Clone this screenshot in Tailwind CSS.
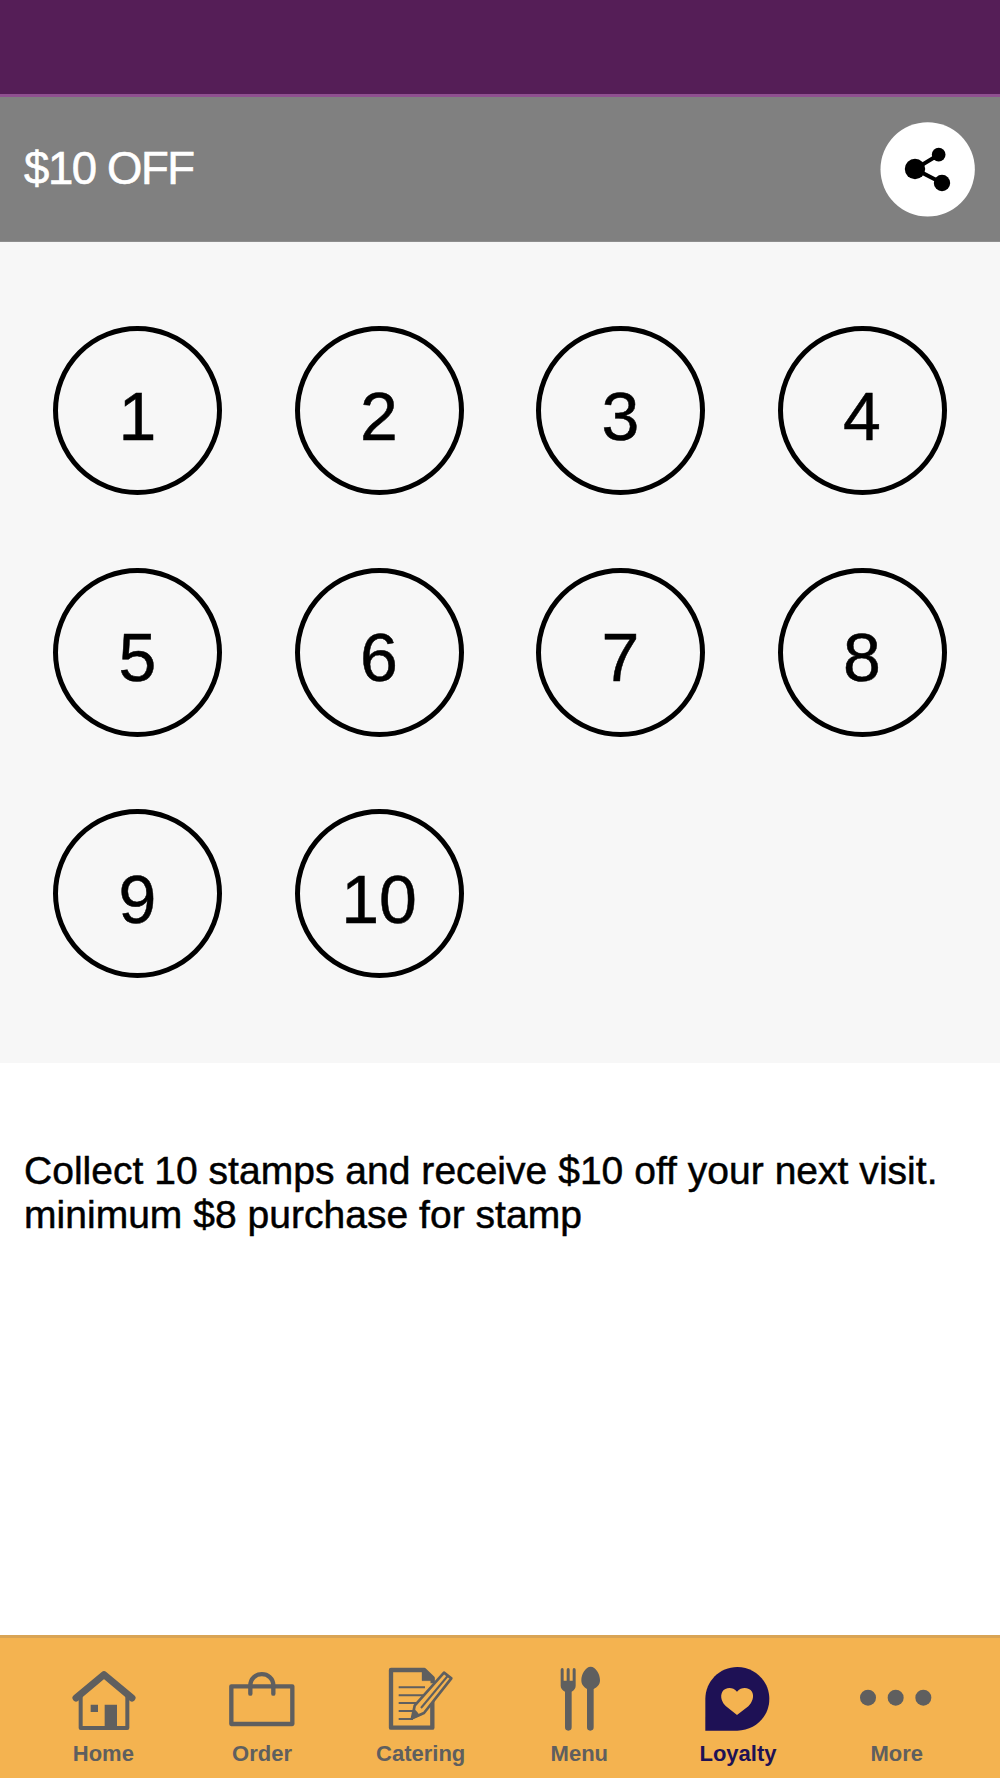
<!DOCTYPE html>
<html lang="en">
<head>
    <meta charset="UTF-8">
    <meta name="viewport" content="width=device-width, initial-scale=1.0">
    <script src="https://cdn.jsdelivr.net/npm/@tailwindcss/browser@4"></script>
    <title>$10 OFF</title>
</head>
<body class="bg-white font-['Liberation_Sans',Arial,sans-serif] text-black">

    <div class="w-[1000px] h-[1778px] flex flex-col overflow-hidden">

        <div class="h-[97px] shrink-0 bg-[#551e57] border-b-3 border-[#8f5090]"></div>

        <header class="h-[145px] shrink-0 bg-[#808080] border-b border-[#8e8e8e] flex items-center justify-between pl-6 pr-[25px]">
            <h1 id="title" class="text-[45.5px] leading-none tracking-[-1.4px] text-white [-webkit-text-stroke:0.6px_white]">$10 OFF</h1>
            <button class="size-[95px] flex items-center justify-center">
                <svg class="size-[95px]" viewBox="60 125 285 285">
                    <circle cx="203" cy="267" r="141.5" fill="#fff"/>
                    <path d="M236 223L165 266L246 308" fill="none" stroke="#000" stroke-width="12"/>
                    <circle cx="165" cy="266" r="30.5"/>
                    <circle cx="236" cy="223" r="20.5"/>
                    <circle cx="246" cy="308" r="24.5"/>
                </svg>
            </button>
        </header>

        <!-- stamps -->
        <main class="h-[821px] shrink-0 bg-[#f7f7f7] pl-[53px] pt-[84px]">
            <div class="grid grid-cols-[repeat(4,169px)] gap-x-[72.5px] gap-y-[72.5px] text-[68px] [-webkit-text-stroke:0.5px_black]">
                <div class="size-[169px] rounded-full border-5 border-black flex items-center justify-center leading-none pt-2.5">1</div>
                <div class="size-[169px] rounded-full border-5 border-black flex items-center justify-center leading-none pt-2.5">2</div>
                <div class="size-[169px] rounded-full border-5 border-black flex items-center justify-center leading-none pt-2.5">3</div>
                <div class="size-[169px] rounded-full border-5 border-black flex items-center justify-center leading-none pt-2.5">4</div>
                <div class="size-[169px] rounded-full border-5 border-black flex items-center justify-center leading-none pt-2.5">5</div>
                <div class="size-[169px] rounded-full border-5 border-black flex items-center justify-center leading-none pt-2.5">6</div>
                <div class="size-[169px] rounded-full border-5 border-black flex items-center justify-center leading-none pt-2.5">7</div>
                <div class="size-[169px] rounded-full border-5 border-black flex items-center justify-center leading-none pt-2.5">8</div>
                <div class="size-[169px] rounded-full border-5 border-black flex items-center justify-center leading-none pt-2.5">9</div>
                <div class="size-[169px] rounded-full border-5 border-black flex items-center justify-center leading-none pt-2.5">10</div>
            </div>
        </main>

        <section class="flex-1 px-6 pt-[86px]">
            <p class="text-[39px] leading-[43.5px] tracking-[0.03px] whitespace-nowrap [-webkit-text-stroke:0.5px_black]">Collect 10 stamps and receive $10 off your next visit.<br>minimum $8 purchase for stamp</p>
        </section>

        <!-- bottom tabs -->
        <nav class="h-[143px] shrink-0 bg-[#f4b350] border-t-3 border-[#d9a455] px-6 grid grid-cols-6 text-[22px] leading-6 font-bold text-[#5f5f5f]">
            <a class="flex flex-col items-center pt-[26px] gap-2">
                <svg class="w-20 h-[70px]" viewBox="40 117 240 210" fill="none" stroke="currentColor" stroke-linecap="round" stroke-linejoin="round">
                    <path d="M93 214V309H233V214" stroke-width="12"/>
                    <path d="M79 219L163 149L247 219" stroke-width="21"/>
                    <path d="M123 239H145V261H123ZM165 239H202V306H165Z" fill="currentColor" stroke="none"/>
                </svg>
                <span>Home</span>
            </a>
            <a class="flex flex-col items-center pt-[26px] gap-2">
                <svg class="w-20 h-[70px]" viewBox="36 117 240 210" fill="none" stroke="currentColor" stroke-width="13" stroke-linecap="round" stroke-linejoin="round">
                    <path d="M64 184H247V297H64Z"/>
                    <path d="M121 206V182C121 136 190 136 190 182V206"/>
                </svg>
                <span>Order</span>
            </a>
            <a class="flex flex-col items-center pt-[26px] gap-2">
                <svg class="w-20 h-[70px]" viewBox="62 117 240 210" fill="none" stroke="currentColor" stroke-linejoin="round">
                    <path d="M216 228V308H92V135H192L217 159V175" stroke-width="13"/>
                    <path d="M185 134H195L220 158V167H185Z" fill="currentColor"/>
                    <path d="M115 187H194M115 211H191M115 234H172M115 258H162M115 282H158" stroke-width="6"/>
                    <path d="M251 143L273 160L191 264L155 280L163 242Z" fill="#f4b350" stroke-width="8"/>
                    <path d="M262 153L182 249" stroke-width="6"/>
                    <path d="M162 252L152 284L187 268L176 269L171 262Z" fill="currentColor"/>
                </svg>
                <span>Catering</span>
            </a>
            <a class="flex flex-col items-center pt-[26px] gap-2">
                <svg class="w-20 h-[70px]" viewBox="88 117 240 210" fill="currentColor">
                    <path d="M153 134Q153 129 158 129Q162 129 162 134V167H171V134Q171 129 175.500 129Q180 129 180 134V167H189V134Q189 129 193 129Q198 129 198 134V182Q198 192 186 200V307Q186 317 176 317Q166 317 166 307V200Q153 192 153 182Z"/>
                    <path d="M243 125C258 125 271 147 271 166C271 179 263 187 252 192V307Q252 317 242 317Q232 317 232 307V192C223 187 215 179 215 166C215 147 228 125 243 125Z"/>
                </svg>
                <span>Menu</span>
            </a>
            <a class="flex flex-col items-center pt-[26px] gap-2 text-[#1e1155]">
                <svg class="w-20 h-[70px]" viewBox="84 117 240 210" fill="currentColor">
                    <path d="M106 317V222C106 169 149 126 202 126C255 126 298 169 298 222C298 275 255 317 202 317Z"/>
                    <path d="M201 200C187 184 166 187 157 200C149 215 156 232 168 244L201 270L235 244C246 232 254 215 246 200C237 187 215 184 201 200Z" fill="#f4b350"/>
                </svg>
                <span>Loyalty</span>
            </a>
            <a class="flex flex-col items-center pt-[26px] gap-2">
                <svg class="w-20 h-[70px]" viewBox="81 117 240 210" fill="currentColor">
                    <circle cx="114" cy="218" r="24"/>
                    <circle cx="197" cy="218" r="24"/>
                    <circle cx="280" cy="218" r="24"/>
                </svg>
                <span>More</span>
            </a>
        </nav>
    </div>

</body>
</html>
